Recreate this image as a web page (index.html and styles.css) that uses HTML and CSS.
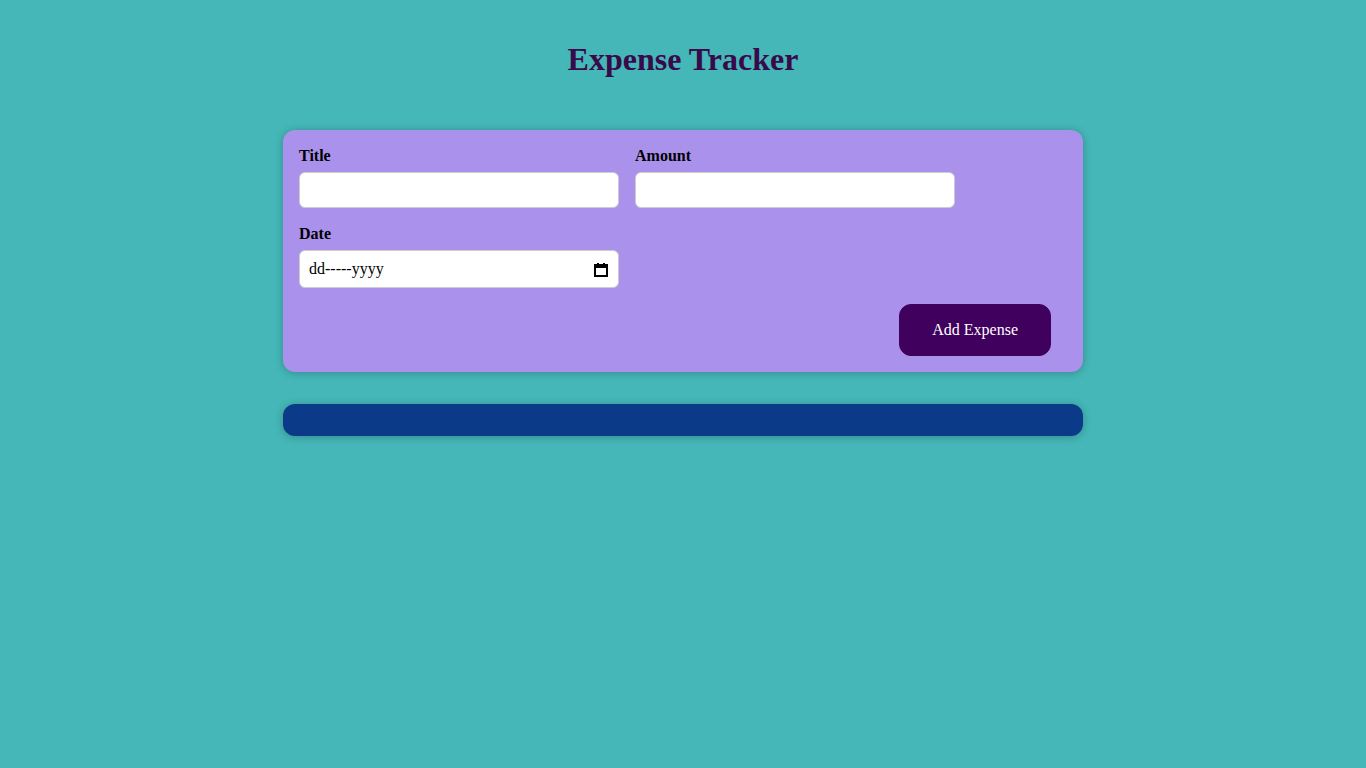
FILE: index.html
```html
<!DOCTYPE html>
<html lang="en">
<head>
<meta charset="utf-8">
<title>Expense Tracker</title>
<link rel="stylesheet" href="styles.css">
</head>
<body>
<h1 class="app-title">Expense Tracker</h1>
<div class="new-expense">
  <form>
    <div class="new-expense__controls">
      <div class="new-expense__control">
        <label>Title</label>
        <input type="text">
      </div>
      <div class="new-expense__control">
        <label>Amount</label>
        <input type="number" min="0.01" step="0.01">
      </div>
      <div class="new-expense__control">
        <label>Date</label>
        <div class="date-field">
          <input type="text" class="date-input" placeholder="dd-----yyyy">
          <svg class="date-icon" width="14" height="15" viewBox="0 0 14 15" aria-hidden="true">
            <rect x="1" y="3" width="12" height="11" fill="none" stroke="#000" stroke-width="2"/>
            <rect x="1" y="3" width="12" height="3" fill="#000"/>
            <rect x="3" y="1" width="2" height="3" fill="#000"/>
            <rect x="9" y="1" width="2" height="3" fill="#000"/>
          </svg>
        </div>
      </div>
    </div>
    <div class="new-expense__actions">
      <button type="button">Add Expense</button>
    </div>
  </form>
</div>
<div class="expenses"></div>
</body>
</html>
```
FILE: styles.css
```css
html, body {
  margin: 0;
  padding: 0;
}
body {
  background: #45b7b8;
  font-family: "Liberation Serif", "Times New Roman", serif;
  font-size: 16px;
  min-height: 768px;
  padding-top: 1px;
}
.app-title {
  text-align: center;
  color: #380a4a;
  font-size: 32px;
  font-weight: bold;
  margin: 40px 0 0;
  line-height: 37px;
}
.new-expense {
  background-color: #aa91ec;
  padding: 16px;
  margin: 52px auto 32px;
  width: 800px;
  box-sizing: border-box;
  border-radius: 12px;
  box-shadow: 0 1px 8px rgba(0, 0, 0, 0.25);
}
.new-expense form {
  margin: 0;
}
.new-expense__controls {
  display: flex;
  flex-wrap: wrap;
  gap: 16px;
  margin-bottom: 16px;
  text-align: left;
}
.new-expense__control label {
  font-weight: bold;
  margin-top: 1px;
  margin-bottom: 7px;
  display: block;
  color: #000;
}
.new-expense__control input {
  font: inherit;
  padding: 8px;
  border-radius: 6px;
  border: 1px solid #ccc;
  width: 320px;
  box-sizing: border-box;
  height: 36px;
  background: #fff;
  color: #000;
  outline: none;
}
.date-field {
  position: relative;
  width: 320px;
}
.new-expense__control .date-input {
  height: 38px;
  padding: 8px 30px 8px 9px;
}
.date-input::placeholder {
  color: #000;
  opacity: 1;
}
.date-icon {
  position: absolute;
  right: 11px;
  top: 12px;
  pointer-events: none;
}
.new-expense__actions {
  text-align: right;
}
.new-expense button {
  font: inherit;
  cursor: pointer;
  padding: 16px 32px;
  border: 1px solid #40005d;
  background-color: #40005d;
  color: white;
  border-radius: 12px;
  margin-right: 16px;
  height: 52px;
  line-height: 18px;
}
.expenses {
  padding: 16px;
  background-color: #0a3a88;
  margin: 0 auto;
  width: 800px;
  box-sizing: border-box;
  border-radius: 12px;
  box-shadow: 0 1px 8px rgba(0, 0, 0, 0.25);
}
```
